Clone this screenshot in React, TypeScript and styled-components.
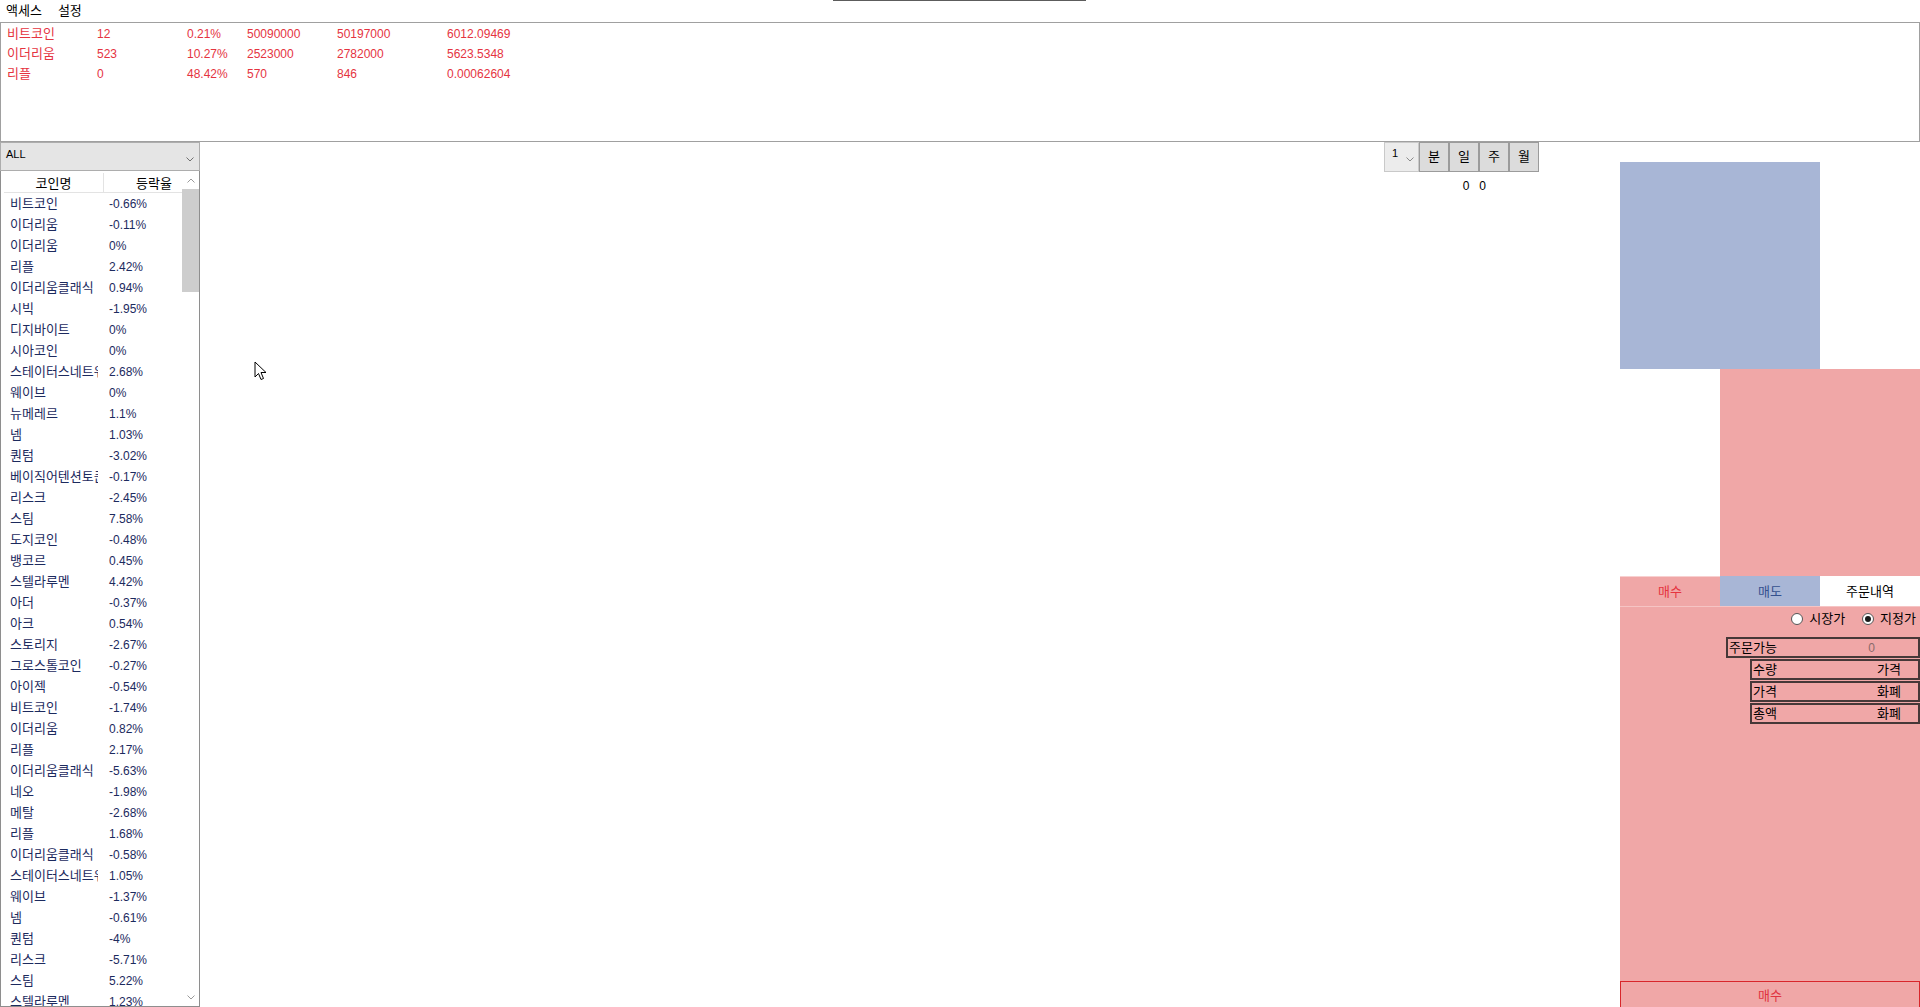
import React from "react";
import styled, { createGlobalStyle } from "styled-components";

const FONT = `"Liberation Sans", "Noto Sans CJK KR", sans-serif`;

const GlobalStyle = createGlobalStyle`
  html, body { margin: 0; padding: 0; background: #ffffff; }
  body { font-family: ${FONT}; font-size: 13px; color: #000; overflow: hidden; }
  * { box-sizing: border-box; }
`;

const Page = styled.div`
  width: 1920px;
  height: 1007px;
  overflow: hidden;
  display: flex;
  flex-direction: column;
  background: #ffffff;
  font-family: ${FONT};
  font-size: 13px;
  line-height: 16px;
`;

const MenuBar = styled.div`
  position: relative;
  height: 22px;
  flex: none;
  display: flex;
  align-items: center;
  gap: 16px;
  padding-left: 6px;
`;

const MenuItem = styled.span`
  color: #000;
`;

const TitleMark = styled.div`
  position: absolute;
  left: 833px;
  top: 0;
  width: 253px;
  height: 1px;
  background: #5c5c5c;
`;

const HoldingsPanel = styled.div`
  height: 120px;
  flex: none;
  border: 1px solid #a0a0a0;
  padding: 1px 0 0 6px;
`;

const HoldingRow = styled.div`
  display: grid;
  grid-template-columns: 90px 90px 60px 90px 110px auto;
  height: 20px;
  align-items: center;
  color: #e5343f;
`;

const Num = styled.span`
  font-size: 12px;
`;

const Latin = styled.span`
  font-size: 11px;
`;

const Main = styled.div`
  flex: 1;
  min-height: 0;
  display: flex;
`;

const Sidebar = styled.div`
  width: 200px;
  flex: none;
  display: flex;
  flex-direction: column;
`;

const Combo = styled.div`
  height: 29px;
  flex: none;
  display: flex;
  justify-content: space-between;
  align-items: flex-start;
  padding: 3px 5px 0 5px;
  background: #e5e5e5;
  border: 1px solid #adadad;
`;

const ComboArrow = styled.svg`
  align-self: center;
  margin-top: 2px;
  flex: none;
`;

const CoinList = styled.div`
  flex: 1;
  min-height: 0;
  display: flex;
  border: 1px solid #8e8e8e;
  border-top: none;
  overflow: hidden;
`;

const ListMain = styled.div`
  flex: 1;
  min-width: 0;
  display: flex;
  flex-direction: column;
`;

const ListHeader = styled.div`
  height: 22px;
  flex: none;
  display: grid;
  grid-template-columns: 100px 1fr;
  margin-left: 3px;
  border-bottom: 1px solid #e3e3e3;
  align-items: stretch;
`;

const HeaderCell = styled.div<{ $pad?: number; $divider?: boolean }>`
  display: flex;
  align-items: center;
  justify-content: center;
  padding-left: ${(p) => p.$pad ?? 0}px;
  padding-top: 3px;
  border-right: ${(p) => (p.$divider ? "1px solid #e3e3e3" : "none")};
  margin: 2px 0 1px;
  color: #000;
`;

const CoinRow = styled.div`
  height: 21px;
  flex: none;
  display: grid;
  grid-template-columns: 88px 1fr;
  column-gap: 11px;
  padding-left: 9px;
  align-items: center;
  color: #1c2a5e;
`;

const CoinName = styled.span`
  min-width: 0;
  overflow: hidden;
  white-space: nowrap;
  text-overflow: clip;
`;

const Scrollbar = styled.div`
  width: 17px;
  flex: none;
  display: flex;
  flex-direction: column;
  background: #ffffff;
`;

const ScrollArrow = styled.div`
  height: 18px;
  flex: none;
  display: flex;
  align-items: center;
  justify-content: center;
`;

const ScrollThumb = styled.div`
  height: 103px;
  flex: none;
  background: #cdcdcd;
`;

const ScrollTrack = styled.div`
  flex: 1;
`;

const ChartArea = styled.div`
  position: relative;
  flex: 1;
  min-width: 0;
  display: flex;
  flex-direction: column;
  align-items: flex-end;
  padding-right: 81px;
`;

const Toolbar = styled.div`
  display: flex;
  height: 30px;
`;

const ToolCombo = styled.div`
  width: 35px;
  height: 30px;
  display: flex;
  justify-content: space-between;
  align-items: flex-start;
  padding: 2px 4px 0 7px;
  background: #ececec;
  border: 1px solid #c9c9c9;
`;

const ToolButton = styled.div`
  width: 30px;
  height: 30px;
  display: flex;
  align-items: center;
  justify-content: center;
  background: #dcdcdc;
  border: 1px solid #9b9b9b;
  color: #000;
`;

const ValueRow = styled.div`
  display: flex;
  gap: 10px;
  margin-top: 6px;
  margin-right: 53px;
`;

const Cursor = styled.svg`
  position: absolute;
  left: 54px;
  top: 219px;
`;

const OrderColumn = styled.div`
  width: 300px;
  flex: none;
  display: flex;
  flex-direction: column;
  padding-top: 20px;
`;

const Block = styled.div<{ $color: string; $right?: boolean }>`
  width: 200px;
  height: 207px;
  flex: none;
  background: ${(p) => p.$color};
  align-self: ${(p) => (p.$right ? "flex-end" : "flex-start")};
`;

const OrderPanel = styled.div`
  flex: 1;
  min-height: 0;
  display: flex;
  flex-direction: column;
  background: #f0a7a7;
`;

const TabRow = styled.div`
  display: grid;
  grid-template-columns: repeat(3, 100px);
  height: 31px;
  flex: none;
  border-bottom: 1px solid #f6c4c4;
`;

const Tab = styled.div<{ $bg: string; $fg: string; $line: string }>`
  display: flex;
  align-items: center;
  justify-content: center;
  background: ${(p) => p.$bg};
  color: ${(p) => p.$fg};
  border-top: 1px solid ${(p) => p.$line};
`;

const RadioRow = styled.div`
  height: 24px;
  flex: none;
  display: flex;
  justify-content: flex-end;
  align-items: center;
  gap: 17px;
  padding-right: 4px;
`;

const RadioOption = styled.label`
  display: flex;
  align-items: center;
  gap: 6px;
  color: #000;
`;

const RadioDot = styled.span<{ $checked?: boolean }>`
  width: 12px;
  height: 12px;
  border-radius: 50%;
  background: #ffffff;
  border: 1px solid #555;
  display: flex;
  align-items: center;
  justify-content: center;
  &::after {
    content: "";
    width: 6px;
    height: 6px;
    border-radius: 50%;
    background: ${(p) => (p.$checked ? "#1a1a1a" : "transparent")};
  }
`;

const InfoStack = styled.div`
  display: flex;
  flex-direction: column;
  gap: 1px;
  margin-top: 6px;
`;

const InfoBox = styled.div<{ $indent: number; $valuePad: number }>`
  height: 21px;
  margin-left: ${(p) => p.$indent}px;
  display: flex;
  justify-content: space-between;
  align-items: center;
  padding: 0 ${(p) => p.$valuePad}px 0 1px;
  border: 2px solid #463838;
  color: #000;
`;

const InfoValue = styled.span<{ $muted?: boolean }>`
  color: ${(p) => (p.$muted ? "#8a6a6a" : "#000")};
`;

const SubmitButton = styled.div`
  height: 30px;
  flex: none;
  margin-top: auto;
  margin-bottom: -4px;
  display: flex;
  align-items: center;
  justify-content: center;
  border: 1px solid #d8262b;
  color: #e03340;
`;

const Chevron = ({ up = false, color = "#707070" }: { up?: boolean; color?: string }) => (
  <svg width="8" height="5" viewBox="0 0 8 5">
    <polyline
      points={up ? "0.5,4.5 4,1 7.5,4.5" : "0.5,0.5 4,4 7.5,0.5"}
      fill="none"
      stroke={color}
      strokeWidth="1"
    />
  </svg>
);

const holdings = [
  ["비트코인", "12", "0.21%", "50090000", "50197000", "6012.09469"],
  ["이더리움", "523", "10.27%", "2523000", "2782000", "5623.5348"],
  ["리플", "0", "48.42%", "570", "846", "0.00062604"],
];

const coins: [string, string][] = [
  ["비트코인", "-0.66%"],
  ["이더리움", "-0.11%"],
  ["이더리움", "0%"],
  ["리플", "2.42%"],
  ["이더리움클래식", "0.94%"],
  ["시빅", "-1.95%"],
  ["디지바이트", "0%"],
  ["시아코인", "0%"],
  ["스테이터스네트워크", "2.68%"],
  ["웨이브", "0%"],
  ["뉴메레르", "1.1%"],
  ["넴", "1.03%"],
  ["퀀텀", "-3.02%"],
  ["베이직어텐션토큰", "-0.17%"],
  ["리스크", "-2.45%"],
  ["스팀", "7.58%"],
  ["도지코인", "-0.48%"],
  ["뱅코르", "0.45%"],
  ["스텔라루멘", "4.42%"],
  ["아더", "-0.37%"],
  ["아크", "0.54%"],
  ["스토리지", "-2.67%"],
  ["그로스톨코인", "-0.27%"],
  ["아이젝", "-0.54%"],
  ["비트코인", "-1.74%"],
  ["이더리움", "0.82%"],
  ["리플", "2.17%"],
  ["이더리움클래식", "-5.63%"],
  ["네오", "-1.98%"],
  ["메탈", "-2.68%"],
  ["리플", "1.68%"],
  ["이더리움클래식", "-0.58%"],
  ["스테이터스네트워크", "1.05%"],
  ["웨이브", "-1.37%"],
  ["넴", "-0.61%"],
  ["퀀텀", "-4%"],
  ["리스크", "-5.71%"],
  ["스팀", "5.22%"],
  ["스텔라루멘", "1.23%"],
  ["아더", "0.12%"],
];

export default function App() {
  return (
    <Page>
      <GlobalStyle />
      <MenuBar>
        <MenuItem>액세스</MenuItem>
        <MenuItem>설정</MenuItem>
        <TitleMark />
      </MenuBar>

      <HoldingsPanel>
        {holdings.map((h, i) => (
          <HoldingRow key={i}>
            <span>{h[0]}</span>
            <Num>{h[1]}</Num>
            <Num>{h[2]}</Num>
            <Num>{h[3]}</Num>
            <Num>{h[4]}</Num>
            <Num>{h[5]}</Num>
          </HoldingRow>
        ))}
      </HoldingsPanel>

      <Main>
        <Sidebar>
          <Combo>
            <Latin>ALL</Latin>
            <ComboArrow width="8" height="5" viewBox="0 0 8 5">
              <polyline points="0.5,0.5 4,4 7.5,0.5" fill="none" stroke="#707070" strokeWidth="1" />
            </ComboArrow>
          </Combo>
          <CoinList>
            <ListMain>
              <ListHeader>
                <HeaderCell $divider>코인명</HeaderCell>
                <HeaderCell $pad={22}>등락율</HeaderCell>
              </ListHeader>
              {coins.map(([name, rate], i) => (
                <CoinRow key={i}>
                  <CoinName>{name}</CoinName>
                  <Num>{rate}</Num>
                </CoinRow>
              ))}
            </ListMain>
            <Scrollbar>
              <ScrollArrow>
                <Chevron up color="#9a9a9a" />
              </ScrollArrow>
              <ScrollThumb />
              <ScrollTrack />
              <ScrollArrow>
                <Chevron color="#9a9a9a" />
              </ScrollArrow>
            </Scrollbar>
          </CoinList>
        </Sidebar>

        <ChartArea>
          <Toolbar>
            <ToolCombo>
              <Latin>1</Latin>
              <ComboArrow width="8" height="5" viewBox="0 0 8 5">
                <polyline points="0.5,0.5 4,4 7.5,0.5" fill="none" stroke="#8a8a8a" strokeWidth="1" />
              </ComboArrow>
            </ToolCombo>
            <ToolButton>분</ToolButton>
            <ToolButton>일</ToolButton>
            <ToolButton>주</ToolButton>
            <ToolButton>월</ToolButton>
          </Toolbar>
          <ValueRow>
            <Num>0</Num>
            <Num>0</Num>
          </ValueRow>
          <Cursor width="14" height="21" viewBox="0 0 14 21">
            <path
              d="M1 1 L1 16 L4.5 12.5 L7 18.5 L9.5 17.5 L7 11.5 L12 11.5 Z"
              fill="#ffffff"
              stroke="#000000"
              strokeWidth="1"
              strokeLinejoin="miter"
            />
          </Cursor>
        </ChartArea>

        <OrderColumn>
          <Block $color="#a8b6d6" />
          <Block $color="#f0a7a7" $right />
          <OrderPanel>
            <TabRow>
              <Tab $bg="#f0a7a7" $fg="#e5343f" $line="#f8d0d0">매수</Tab>
              <Tab $bg="#a8b6d6" $fg="#34508e" $line="#a8b6d6">매도</Tab>
              <Tab $bg="#ffffff" $fg="#000000" $line="#ffffff">주문내역</Tab>
            </TabRow>
            <RadioRow>
              <RadioOption>
                <RadioDot />
                시장가
              </RadioOption>
              <RadioOption>
                <RadioDot $checked />
                지정가
              </RadioOption>
            </RadioRow>
            <InfoStack>
              <InfoBox $indent={106} $valuePad={43}>
                <span>주문가능</span>
                <InfoValue $muted>
                  <Num>0</Num>
                </InfoValue>
              </InfoBox>
              <InfoBox $indent={130} $valuePad={17}>
                <span>수량</span>
                <InfoValue>가격</InfoValue>
              </InfoBox>
              <InfoBox $indent={130} $valuePad={17}>
                <span>가격</span>
                <InfoValue>화폐</InfoValue>
              </InfoBox>
              <InfoBox $indent={130} $valuePad={17}>
                <span>총액</span>
                <InfoValue>화폐</InfoValue>
              </InfoBox>
            </InfoStack>
            <SubmitButton>매수</SubmitButton>
          </OrderPanel>
        </OrderColumn>
      </Main>
    </Page>
  );
}
